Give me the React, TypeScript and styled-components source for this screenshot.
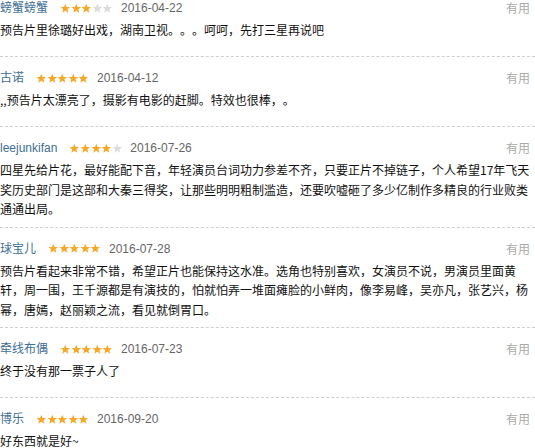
import React from 'react';
import styled, { createGlobalStyle } from 'styled-components';

interface Review {
    name: string;
    stars: number;
    date: string;
    text: string;
}

const reviews: Review[] = [
    { name: '螃蟹螃蟹', stars: 3, date: '2016-04-22', text: '预告片里徐璐好出戏，湖南卫视。。。呵呵，先打三星再说吧' },
    { name: '古诺', stars: 5, date: '2016-04-12', text: ',,预告片太漂亮了，摄影有电影的赶脚。特效也很棒，。' },
    {
        name: 'leejunkifan',
        stars: 4,
        date: '2016-07-26',
        text: '四星先给片花，最好能配下音，年轻演员台词功力参差不齐，只要正片不掉链子，个人希望17年飞天奖历史部门是这部和大秦三得奖，让那些明明粗制滥造，还要吹嘘砸了多少亿制作多精良的行业败类通通出局。',
    },
    {
        name: '球宝儿',
        stars: 5,
        date: '2016-07-28',
        text: '预告片看起来非常不错，希望正片也能保持这水准。选角也特别喜欢，女演员不说，男演员里面黄轩，周一围，王千源都是有演技的，怕就怕弄一堆面瘫脸的小鲜肉，像李易峰，吴亦凡，张艺兴，杨幂，唐嫣，赵丽颖之流，看见就倒胃口。',
    },
    { name: '牵线布偶', stars: 5, date: '2016-07-23', text: '终于没有那一票子人了' },
    { name: '博乐', stars: 5, date: '2016-09-20', text: '好东西就是好~' },
];

const Star: React.FC<{ on: boolean }> = ({ on }) => (
    <StarIcon viewBox="0 0 24 24" $on={on}>
        <polygon points="12,1.5 15,8.8 22.8,9.3 16.8,14.3 18.7,22 12,17.8 5.3,22 7.2,14.3 1.2,9.3 9,8.8" />
    </StarIcon>
);

const App: React.FC = () => {
    return (
        <>
            <GlobalStyle />
            <List>
                {reviews.map((r) => (
                    <Item key={r.name}>
                        <Header>
                            <Name>{r.name}</Name>
                            <Stars>
                                {[1, 2, 3, 4, 5].map((n) => (
                                    <Star key={n} on={n <= r.stars} />
                                ))}
                            </Stars>
                            <DateText>{r.date}</DateText>
                            <Useful>有用</Useful>
                        </Header>
                        <Body>{r.text}</Body>
                    </Item>
                ))}
            </List>
        </>
    );
};

export default App;

const GlobalStyle = createGlobalStyle`
  body {
    margin: 0;
    background: #fff;
    font-family: "Noto Sans CJK SC", "Liberation Sans", sans-serif;
  }
`;

const List = styled.div`
  width: 535px;
  margin-top: -1px;
`;

const Item = styled.div`
  padding-top: 12px;
  border-bottom: 1px dashed #cfcfcf;

  &:first-child {
    padding-top: 0;
  }
`;

const Header = styled.div`
  display: flex;
  align-items: center;
  height: 18px;
  line-height: 18px;
  padding-right: 5px;
`;

const Name = styled.span`
  font-family: "Liberation Sans", "Noto Sans CJK SC", sans-serif;
  font-size: 12px;
  color: #3f6f95;
  margin-right: 12px;
`;

const Stars = styled.span`
  display: flex;
  margin-right: 8px;
`;

const StarIcon = styled.svg<{ $on: boolean }>`
  width: 10.6px;
  height: 10.6px;
  fill: ${(p) => (p.$on ? '#f5a82a' : '#dcdcdc')};
`;

const DateText = styled.span`
  font-family: "Liberation Sans", sans-serif;
  font-size: 12px;
  color: #666;
`;

const Useful = styled.span`
  margin-left: auto;
  font-size: 12px;
  color: #aaa;
`;

const Body = styled.div`
  margin-top: 3px;
  min-height: 28px;
  padding-bottom: 8px;
  font-size: 12px;
  line-height: 19.5px;
  color: #111;
  word-break: break-all;
  text-spacing-trim: space-all;
`;
